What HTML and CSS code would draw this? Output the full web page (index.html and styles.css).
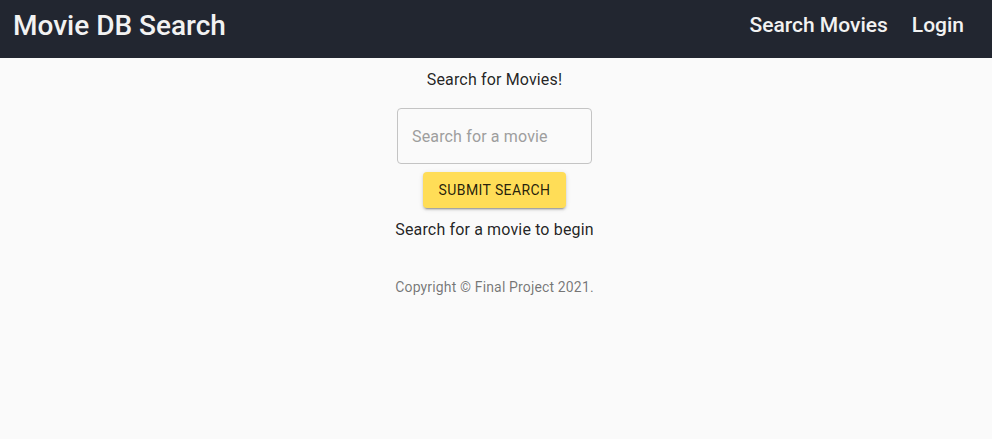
FILE: index.html
```html
<!DOCTYPE html>
<html>
<head>
<meta charset="utf-8">
<link rel="stylesheet" href="styles.css">
</head>
<body>
<header class="bar">
  <div class="brand">Movie DB Search</div>
  <nav class="nav">
    <a class="nav-link">Search Movies</a>
    <a class="nav-link">Login</a>
  </nav>
</header>
<main class="main">
  <p class="heading">Search for Movies!</p>
  <div class="field"><input class="input" type="text" placeholder="Search for a movie"></div>
  <button class="btn">Submit Search</button>
  <p class="hint">Search for a movie to begin</p>
  <p class="copy">Copyright © Final Project 2021.</p>
</main>
</body>
</html>
```

FILE: styles.css
```css
* { box-sizing: border-box; }
html, body { margin: 0; padding: 0; }
body {
  background: #fafafa;
  font-family: Roboto, "Liberation Sans", sans-serif;
  color: rgba(0,0,0,0.87);
  height: 439px;
}
.bar {
  height: 58px;
  background: #222630;
  display: flex;
  align-items: center;
  justify-content: space-between;
  padding: 0 28px 0 13px;
}
.brand {
  color: #f2f2f2;
  font-size: 28px;
  font-weight: 500;
  margin-top: -8px;
}
.nav { display: flex; gap: 24px; margin-top: -8px; }
.nav-link {
  color: #f2f2f2;
  font-size: 21px;
  font-weight: 500;
}
.main {
  display: flex;
  flex-direction: column;
  align-items: center;
  padding-right: 3px;
}
.heading {
  margin: 12px 0 0;
  font-size: 16px;
  line-height: 20px;
  letter-spacing: 0.15px;
}
.field { margin-top: 18px; }
.input {
  width: 195px;
  height: 56px;
  border: 1px solid #c4c4c4;
  border-radius: 4px;
  background: transparent;
  padding: 0 14px;
  font-family: Roboto, "Liberation Sans", sans-serif;
  font-size: 16px;
  letter-spacing: 0.15px;
  outline: none;
}
.input::placeholder { color: #9e9e9e; }
.btn {
  margin-top: 8px;
  width: 143px;
  height: 36px;
  border: 0;
  border-radius: 4px;
  background: #ffdd57;
  color: rgba(0,0,0,0.87);
  font-family: Roboto, "Liberation Sans", sans-serif;
  font-size: 14px;
  font-weight: 400;
  text-transform: uppercase;
  letter-spacing: 0.4px;
  box-shadow: 0 3px 1px -2px rgba(0,0,0,0.2), 0 2px 2px 0 rgba(0,0,0,0.14), 0 1px 5px 0 rgba(0,0,0,0.12);
}
.hint {
  margin: 12px 0 0;
  font-size: 16px;
  line-height: 20px;
  letter-spacing: 0.15px;
}
.copy {
  margin: 37px 0 0;
  font-size: 14px;
  line-height: 20px;
  color: rgba(0,0,0,0.54);
  letter-spacing: 0.15px;
}
```
